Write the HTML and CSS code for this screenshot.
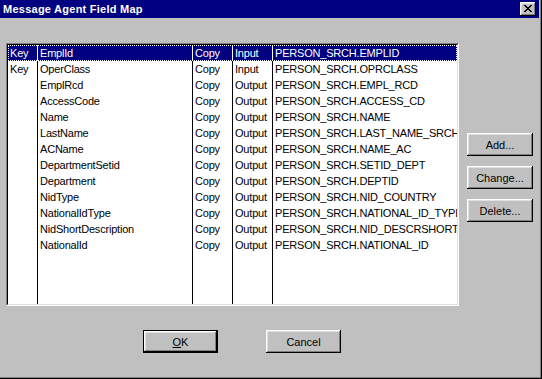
FILE: index.html
```html
<!DOCTYPE html>
<html>
<head>
<meta charset="utf-8">
<link rel="stylesheet" href="styles.css">
</head>
<body>
<div class="window">
  <div class="titlebar">
    <span class="title">Message Agent Field Map</span>
    <div class="close">
      <svg width="8" height="7" viewBox="0 0 8 7"><path d="M0 0h2v1h1v1h2v-1h1v-1h2v1h-1v1h-1v1h-1v1h1v1h1v1h1v1h-2v-1h-1v-1h-2v1h-1v1h-2v-1h1v-1h1v-1h1v-1h-1v-1h-1v-1h-1z" fill="#000"/></svg>
    </div>
  </div>
  <div class="content">
    <div class="main">
      <div class="listbox">
        <div class="listbox-inner">
          <div class="row selected"><span class="c">Key</span><span class="c">EmplId</span><span class="c">Copy</span><span class="c">Input</span><span class="c">PERSON_SRCH.EMPLID</span></div>
          <div class="row"><span class="c">Key</span><span class="c">OperClass</span><span class="c">Copy</span><span class="c">Input</span><span class="c">PERSON_SRCH.OPRCLASS</span></div>
          <div class="row"><span class="c"></span><span class="c">EmplRcd</span><span class="c">Copy</span><span class="c">Output</span><span class="c">PERSON_SRCH.EMPL_RCD</span></div>
          <div class="row"><span class="c"></span><span class="c">AccessCode</span><span class="c">Copy</span><span class="c">Output</span><span class="c">PERSON_SRCH.ACCESS_CD</span></div>
          <div class="row"><span class="c"></span><span class="c">Name</span><span class="c">Copy</span><span class="c">Output</span><span class="c">PERSON_SRCH.NAME</span></div>
          <div class="row"><span class="c"></span><span class="c">LastName</span><span class="c">Copy</span><span class="c">Output</span><span class="c">PERSON_SRCH.LAST_NAME_SRCH</span></div>
          <div class="row"><span class="c"></span><span class="c">ACName</span><span class="c">Copy</span><span class="c">Output</span><span class="c">PERSON_SRCH.NAME_AC</span></div>
          <div class="row"><span class="c"></span><span class="c">DepartmentSetid</span><span class="c">Copy</span><span class="c">Output</span><span class="c">PERSON_SRCH.SETID_DEPT</span></div>
          <div class="row"><span class="c"></span><span class="c">Department</span><span class="c">Copy</span><span class="c">Output</span><span class="c">PERSON_SRCH.DEPTID</span></div>
          <div class="row"><span class="c"></span><span class="c">NidType</span><span class="c">Copy</span><span class="c">Output</span><span class="c">PERSON_SRCH.NID_COUNTRY</span></div>
          <div class="row"><span class="c"></span><span class="c">NationalIdType</span><span class="c">Copy</span><span class="c">Output</span><span class="c">PERSON_SRCH.NATIONAL_ID_TYPE</span></div>
          <div class="row"><span class="c"></span><span class="c">NidShortDescription</span><span class="c">Copy</span><span class="c">Output</span><span class="c">PERSON_SRCH.NID_DESCRSHORT</span></div>
          <div class="row"><span class="c"></span><span class="c">NationalId</span><span class="c">Copy</span><span class="c">Output</span><span class="c">PERSON_SRCH.NATIONAL_ID</span></div>
        </div>
      </div>
      <div class="side-buttons">
        <div class="btn">Add...</div>
        <div class="btn">Change...</div>
        <div class="btn">Delete...</div>
      </div>
    </div>
    <div class="footer">
      <div class="btn default"><span class="u">O</span>K</div>
      <div class="btn">Cancel</div>
    </div>
  </div>
</div>
</body>
</html>
```
FILE: styles.css
```css
html, body {
  margin: 0;
  padding: 0;
  background: #c0c0c0;
}
body {
  font-family: "Liberation Sans", Arial, sans-serif;
  font-size: 11px;
  color: #000;
}
.window {
  width: 542px;
  height: 379px;
  box-sizing: border-box;
  padding-right: 3px;
  padding-bottom: 3px;
  background: #c0c0c0;
  box-shadow: inset -1px -1px #000, inset -2px -2px #808080;
  display: flex;
  flex-direction: column;
  overflow: hidden;
}
.titlebar {
  height: 18px;
  flex: none;
  background: #000080;
  display: flex;
  align-items: center;
  padding-left: 3px;
}
.title {
  color: #fff;
  font-weight: bold;
  font-size: 11px;
  letter-spacing: 0.25px;
  line-height: 18px;
}
.close {
  margin-left: auto;
  margin-right: 3px;
  width: 16px;
  height: 14px;
  box-sizing: border-box;
  background: #c0c0c0;
  box-shadow: inset -1px -1px #000, inset 1px 1px #fff, inset -2px -2px #808080, inset 2px 2px #dfdfdf;
  display: flex;
  align-items: center;
  justify-content: center;
}
.close svg {
  display: block;
  margin-left: -1px;
  margin-top: -1px;
}
.content {
  padding: 25px 0 0 6px;
  flex: 1;
}
.main {
  display: flex;
  align-items: flex-start;
}
.listbox {
  width: 453px;
  height: 263px;
  box-sizing: border-box;
  border: 1px solid;
  border-color: #808080 #fff #fff #808080;
}
.listbox-inner {
  height: 100%;
  box-sizing: border-box;
  border: 1px solid;
  border-color: #000 #dfdfdf #dfdfdf #000;
  background:
    linear-gradient(#000, #000) 29px 0 / 1px 100% no-repeat,
    linear-gradient(#000, #000) 184px 0 / 1px 100% no-repeat,
    linear-gradient(#000, #000) 224px 0 / 1px 100% no-repeat,
    linear-gradient(#000, #000) 264px 0 / 1px 100% no-repeat,
    #fff;
  overflow: hidden;
}
.row {
  display: grid;
  grid-template-columns: 29px 155px 40px 40px 1fr;
  height: 16px;
  line-height: 16px;
  letter-spacing: -0.2px;
  white-space: nowrap;
}
.c {
  overflow: hidden;
  padding-left: 2px;
  border-left: 1px solid transparent;
}
.c:first-child {
  border-left: none;
}
.row.selected {
  background: #000080;
  color: #fff;
  outline: 1px dotted #fff;
  outline-offset: -1px;
}
.row.selected .c {
  border-left-color: #fff;
}
.row.selected .c:first-child {
  border-left: none;
}
.side-buttons {
  margin-left: 8px;
  margin-top: 90px;
  display: flex;
  flex-direction: column;
  gap: 10px;
}
.btn {
  width: 66px;
  height: 23px;
  box-sizing: border-box;
  background: #c0c0c0;
  box-shadow: inset -1px -1px #000, inset 1px 1px #fff, inset -2px -2px #808080, inset 2px 2px #dfdfdf;
  display: flex;
  align-items: center;
  justify-content: center;
  line-height: 14px;
}
.footer {
  display: flex;
  gap: 48px;
  margin-top: 24px;
  padding-left: 137px;
}
.footer .btn {
  width: 75px;
}
.btn.default {
  border: 1px solid #000;
}
.u {
  text-decoration: underline;
}
```
